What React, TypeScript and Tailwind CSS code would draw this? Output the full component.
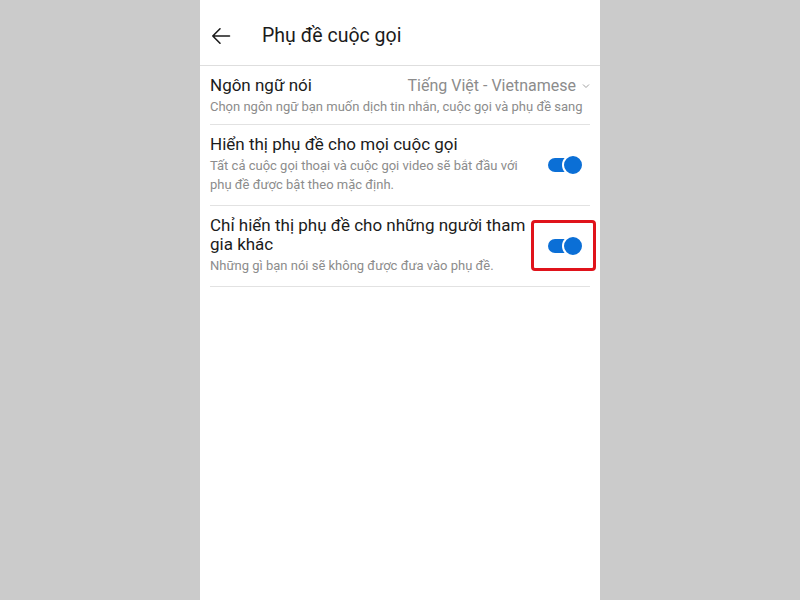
import type { ReactNode } from "react";

const Toggle = () => (
  <div className="relative h-[22px] w-[36px]">
    <div className="absolute left-0 top-[4px] h-[14px] w-[26px] rounded-full bg-[#0b6fd6]" />
    <div className="absolute right-0 top-0 h-[22px] w-[22px] rounded-full border-2 border-white bg-[#0b6fd6]" />
  </div>
);

const Row = ({
  title,
  sub,
  right,
}: {
  title: ReactNode;
  sub: ReactNode;
  right?: ReactNode;
}) => (
  <div className="flex items-center border-b border-[#e2e2e2] pt-[10px] pb-[11px]">
    <div className="w-[322px]">
      <div className="text-[17px] leading-[19px] text-[#1b1b1b]">{title}</div>
      <div className="mt-[2px] text-[13px] leading-[19px] text-[#8c8c8c]">{sub}</div>
    </div>
    <div className="flex flex-1 justify-end pr-[6px]">{right}</div>
  </div>
);

export default function App() {
  return (
    <div
      className="flex h-[600px] w-full justify-center bg-[#cbcbcb]"
      style={{ fontFamily: 'Roboto, "Noto Sans", sans-serif' }}
    >
      <div className="w-[400px] bg-white">
        <header className="flex h-[66px] items-center border-b border-[#dedede] pt-[6px]">
          <svg
            className="ml-[11px] h-[20px] w-[20px]"
            viewBox="0 0 20 20"
            fill="none"
            stroke="#1b1b1b"
            strokeWidth="1.6"
            strokeLinecap="round"
            strokeLinejoin="round"
          >
            <path d="M18.5 10H1.8M9 2.8 1.8 10 9 17.2" />
          </svg>
          <h1 className="ml-[31px] text-[19.5px] text-[#1b1b1b]">Phụ đề cuộc gọi</h1>
        </header>

        <div className="px-[10px]">
          <div className="border-b border-[#e2e2e2] pt-[10px] pb-[8px]">
            <div className="flex items-center justify-between">
              <span className="text-[17px] leading-[19px] text-[#1b1b1b]">Ngôn ngữ nói</span>
              <span className="flex items-center gap-[6px] text-[16px] leading-[19px] text-[#8c8c8c]">
                Tiếng Việt - Vietnamese
                <svg className="h-[6px] w-[8px]" viewBox="0 0 8 6" fill="none" stroke="#a0a0a0" strokeWidth="1">
                  <path d="M1 1.5 4 4.5 7 1.5" />
                </svg>
              </span>
            </div>
            <div className="mt-[2px] whitespace-nowrap text-[13px] leading-[19px] text-[#8c8c8c]">
              Chọn ngôn ngữ bạn muốn dịch tin nhắn, cuộc gọi và phụ đề sang
            </div>
          </div>

          <Row
            title="Hiển thị phụ đề cho mọi cuộc gọi"
            sub="Tất cả cuộc gọi thoại và cuộc gọi video sẽ bắt đầu với phụ đề được bật theo mặc định."
            right={<Toggle />}
          />

          <Row
            title="Chỉ hiển thị phụ đề cho những người tham gia khác"
            sub="Những gì bạn nói sẽ không được đưa vào phụ đề."
            right={
              <div className="relative">
                <Toggle />
                <div className="absolute -left-[17px] -top-[15px] h-[51px] w-[65px] rounded-[4px] border-[3px] border-[#e0131b]" />
              </div>
            }
          />
        </div>
      </div>
    </div>
  );
}
